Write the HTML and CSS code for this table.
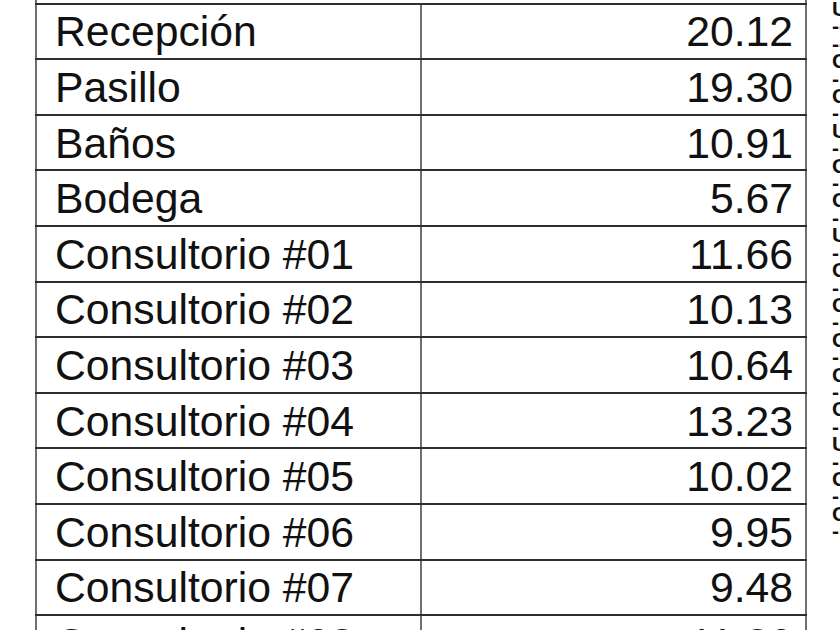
FILE: index.html
```html
<!DOCTYPE html>
<html lang="es">
<head>
<meta charset="utf-8">
<title>Cuadro de áreas</title>
<link rel="stylesheet" href="styles.css">
</head>
<body>
<div class="page">
  <table class="areas">
    <thead>
      <tr><th colspan="2" class="head">Área (m²)</th></tr>
    </thead>
    <tbody>
      <tr><td class="name">Recepción</td><td class="num">20.12</td></tr>
      <tr><td class="name">Pasillo</td><td class="num">19.30</td></tr>
      <tr><td class="name">Baños</td><td class="num">10.91</td></tr>
      <tr><td class="name">Bodega</td><td class="num">5.67</td></tr>
      <tr><td class="name">Consultorio #01</td><td class="num">11.66</td></tr>
      <tr><td class="name">Consultorio #02</td><td class="num">10.13</td></tr>
      <tr><td class="name">Consultorio #03</td><td class="num">10.64</td></tr>
      <tr><td class="name">Consultorio #04</td><td class="num">13.23</td></tr>
      <tr><td class="name">Consultorio #05</td><td class="num">10.02</td></tr>
      <tr><td class="name">Consultorio #06</td><td class="num">9.95</td></tr>
      <tr><td class="name">Consultorio #07</td><td class="num">9.48</td></tr>
      <tr><td class="name">Consultorio #08</td><td class="num">11.30</td></tr>
    </tbody>
  </table>
  <div class="side">U-----C-C-U-I-C-C-U-I-C-C-I-C-I-C-C-U-I-C-C-I-</div>
</div>
</body>
</html>
```

FILE: styles.css
```css
html, body {
  margin: 0;
  padding: 0;
  background: #ffffff;
  overflow: hidden;
}

.page {
  display: flex;
  align-items: flex-start;
  width: 840px;
  height: 630px;
  overflow: hidden;
  font-family: "Liberation Sans", Arial, sans-serif;
  color: #111111;
}

.areas {
  margin-left: 35px;
  margin-top: -59px;
  border-collapse: collapse;
  table-layout: fixed;
  width: 772px;
  flex: none;
}

.areas th,
.areas td {
  height: 53.6px;
  padding: 0;
  font-size: 42.7px;
  font-weight: normal;
  line-height: 48px;
  vertical-align: middle;
  border-top: 2px solid #2e2e2e;
  border-bottom: 2px solid #2e2e2e;
  border-left: 2px solid #6f6f6f;
  border-right: 2px solid #6f6f6f;
  white-space: nowrap;
}

.areas .head {
  text-align: left;
  padding-left: 370px;
  vertical-align: top;
  padding-top: 6px;
}

.areas .name {
  width: 385px;
  padding-left: 18px;
  text-align: left;
}

.areas .num {
  padding-right: 12px;
  text-align: right;
}

.side {
  flex: none;
  width: 22px;
  margin-left: 25px;
  margin-top: 0;
  font-size: 21px;
  font-weight: bold;
  line-height: 17.4px;
  word-break: break-all;
  color: #111111;
}
```
